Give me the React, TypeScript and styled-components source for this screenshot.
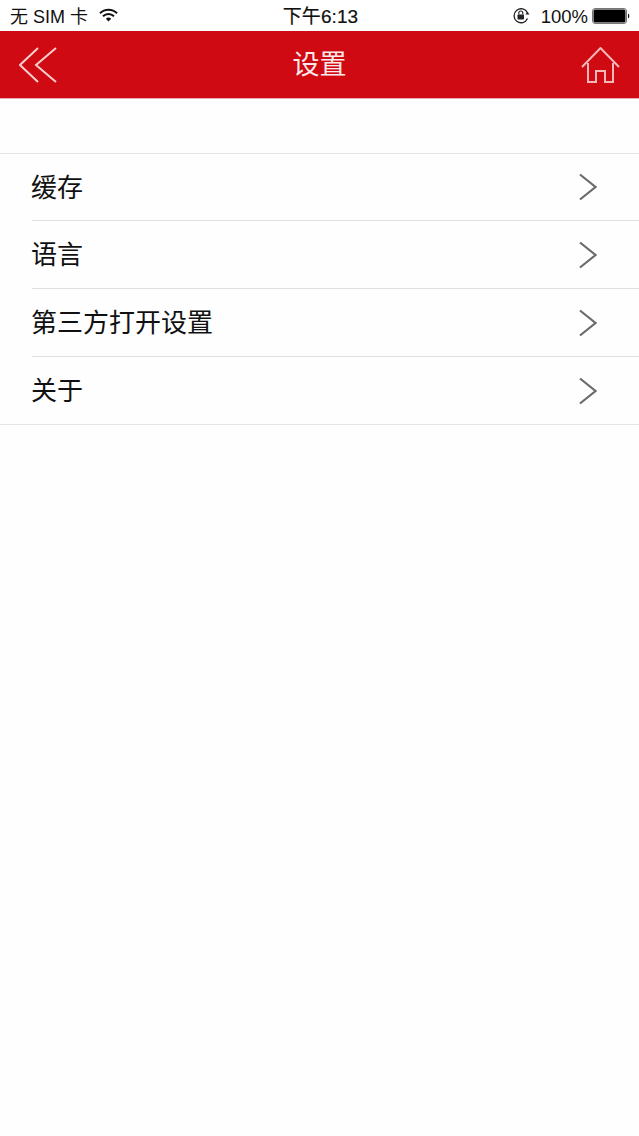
import React from "react";
import styled, { createGlobalStyle } from "styled-components";

const Global = createGlobalStyle`
  html, body { margin: 0; padding: 0; background: #fefefe; }
  body { font-family: "Liberation Sans", "Noto Sans CJK SC", sans-serif; }
`;
const Page = styled.div`
  width: 639px; height: 1136px; overflow: hidden; background: #fefefe; color: #111;
`;
const StatusBar = styled.div`
  height: 31px; background: #fff; display: grid; grid-template-columns: 1fr auto 1fr; align-items: center;
  padding: 0 8px 0 10px; box-sizing: border-box; font-size: 18px; line-height: 31px; color: #111;
`;
const StatusLeft = styled.div`display: flex; align-items: center; gap: 11px; height: 31px;`;
const StatusRight = styled.div`display: flex; align-items: center; justify-content: flex-end; height: 31px;`;
const StatusText = styled.span`position: relative; top: 1px;`;
const WifiGlyph = styled.svg`display: block; fill: none; margin-top: -2px;`;
const StatusGlyph = styled.svg`display: block; fill: none; margin-left: 1px;`;
const Clock = styled.div`font-size: 19px; letter-spacing: 0.1px; -webkit-text-stroke: 0.2px #111; margin-top: 1px;`;
const Percent = styled.span`margin: 0 3px 0 11px; font-size: 18.5px;`;
const NavBar = styled.header`
  height: 68px; background: #cf0a13; display: grid; grid-template-columns: 1fr auto 1fr; align-items: center;
  padding: 0 19px; box-sizing: border-box; border-bottom: 1px solid #e5aeb0;
`;
const NavTitle = styled.h1`margin: 0; font-size: 27px; font-weight: 400; color: #fbeaea; line-height: 68px;`;
const HomeSlot = styled.div`display: flex; justify-content: flex-end;`;
const BackSlot = styled.div`display: flex;`;
const Icon = styled.svg`display: block; fill: none;`;
const List = styled.ul`
  list-style: none; margin: 54px 0 0; padding: 0; background: #fefefe;
  border-top: 1px solid #e4e4e4; border-bottom: 1px solid #e4e4e4;
`;
const Row = styled.li`
  height: 68px; margin-left: 32px; padding-right: 42px; display: flex; align-items: center; justify-content: space-between;
  box-sizing: border-box; font-size: 26px; color: #111;
  &:first-child, &:last-child { height: 67px; }
  &:not(:last-child) { border-bottom: 1px solid #e0e0e0; }
`;
const RowLabel = styled.span`line-height: 30px; margin: 1px 0 0 -1px;`;
const items = ["缓存", "语言", "第三方打开设置", "关于"];

export default function App() {
  return (
    <Page>
      <Global />
      <StatusBar>
        <StatusLeft>
          <StatusText>无 SIM 卡</StatusText>
          <WifiGlyph width="19" height="14" viewBox="0 0 19 14">
            <path d="M1 5.2a12 12 0 0 1 17 0" stroke="#111" strokeWidth="2" />
            <path d="M4 8.2a7.8 7.8 0 0 1 11 0" stroke="#111" strokeWidth="2" />
            <path d="M6.8 10.8 9.5 13.6l2.7-2.8a3.8 3.8 0 0 0-5.4 0z" fill="#111" />
          </WifiGlyph>
        </StatusLeft>
        <Clock>下午6:13</Clock>
        <StatusRight>
          <StatusGlyph width="18" height="18" viewBox="0 0 18 18">
            <path d="M15.5 11.5A7 7 0 1 1 15.5 6" stroke="#222" strokeWidth="1.3" />
            <path d="M13.5 7.5h4l-2-2.7z" fill="#222" />
            <rect x="5.5" y="7.5" width="6.5" height="5" rx="0.8" fill="#222" />
            <path d="M6.8 7.5V6a2 2 0 0 1 4 0v1.5" stroke="#222" strokeWidth="1.1" />
          </StatusGlyph>
          <Percent>100%</Percent>
          <StatusGlyph width="39" height="16" viewBox="0 0 39 16">
            <rect x="0.5" y="0.5" width="34" height="15" rx="2.5" stroke="#777" />
            <rect x="1.5" y="1.5" width="32" height="13" rx="1.5" fill="#000" />
            <path d="M36 5.5a3 3 0 0 1 0 5z" fill="#111" />
          </StatusGlyph>
        </StatusRight>
      </StatusBar>
      <NavBar>
        <BackSlot>
          <Icon width="38" height="36" viewBox="0 0 38 36">
            <path d="M19 1 1 18l18 17M37 1 17 18l20 17" stroke="#f7cfcf" strokeWidth="2" />
          </Icon>
        </BackSlot>
        <NavTitle>设置</NavTitle>
        <HomeSlot>
          <Icon width="39" height="37" viewBox="0 0 39 37">
            <path d="M1 20 19.5 1 38 20" stroke="#f5b8b8" strokeWidth="2" />
            <path d="M7 16v19h8V24h9v11h8V16" stroke="#f5b8b8" strokeWidth="2" />
          </Icon>
        </HomeSlot>
      </NavBar>
      <List>
        {items.map((t) => (
          <Row key={t}>
            <RowLabel>{t}</RowLabel>
            <Icon width="18" height="28" viewBox="0 0 18 28">
              <path d="M1 1.5 16.5 14 1 26.5" stroke="#6b6b6e" strokeWidth="2.2" />
            </Icon>
          </Row>
        ))}
      </List>
    </Page>
  );
}
